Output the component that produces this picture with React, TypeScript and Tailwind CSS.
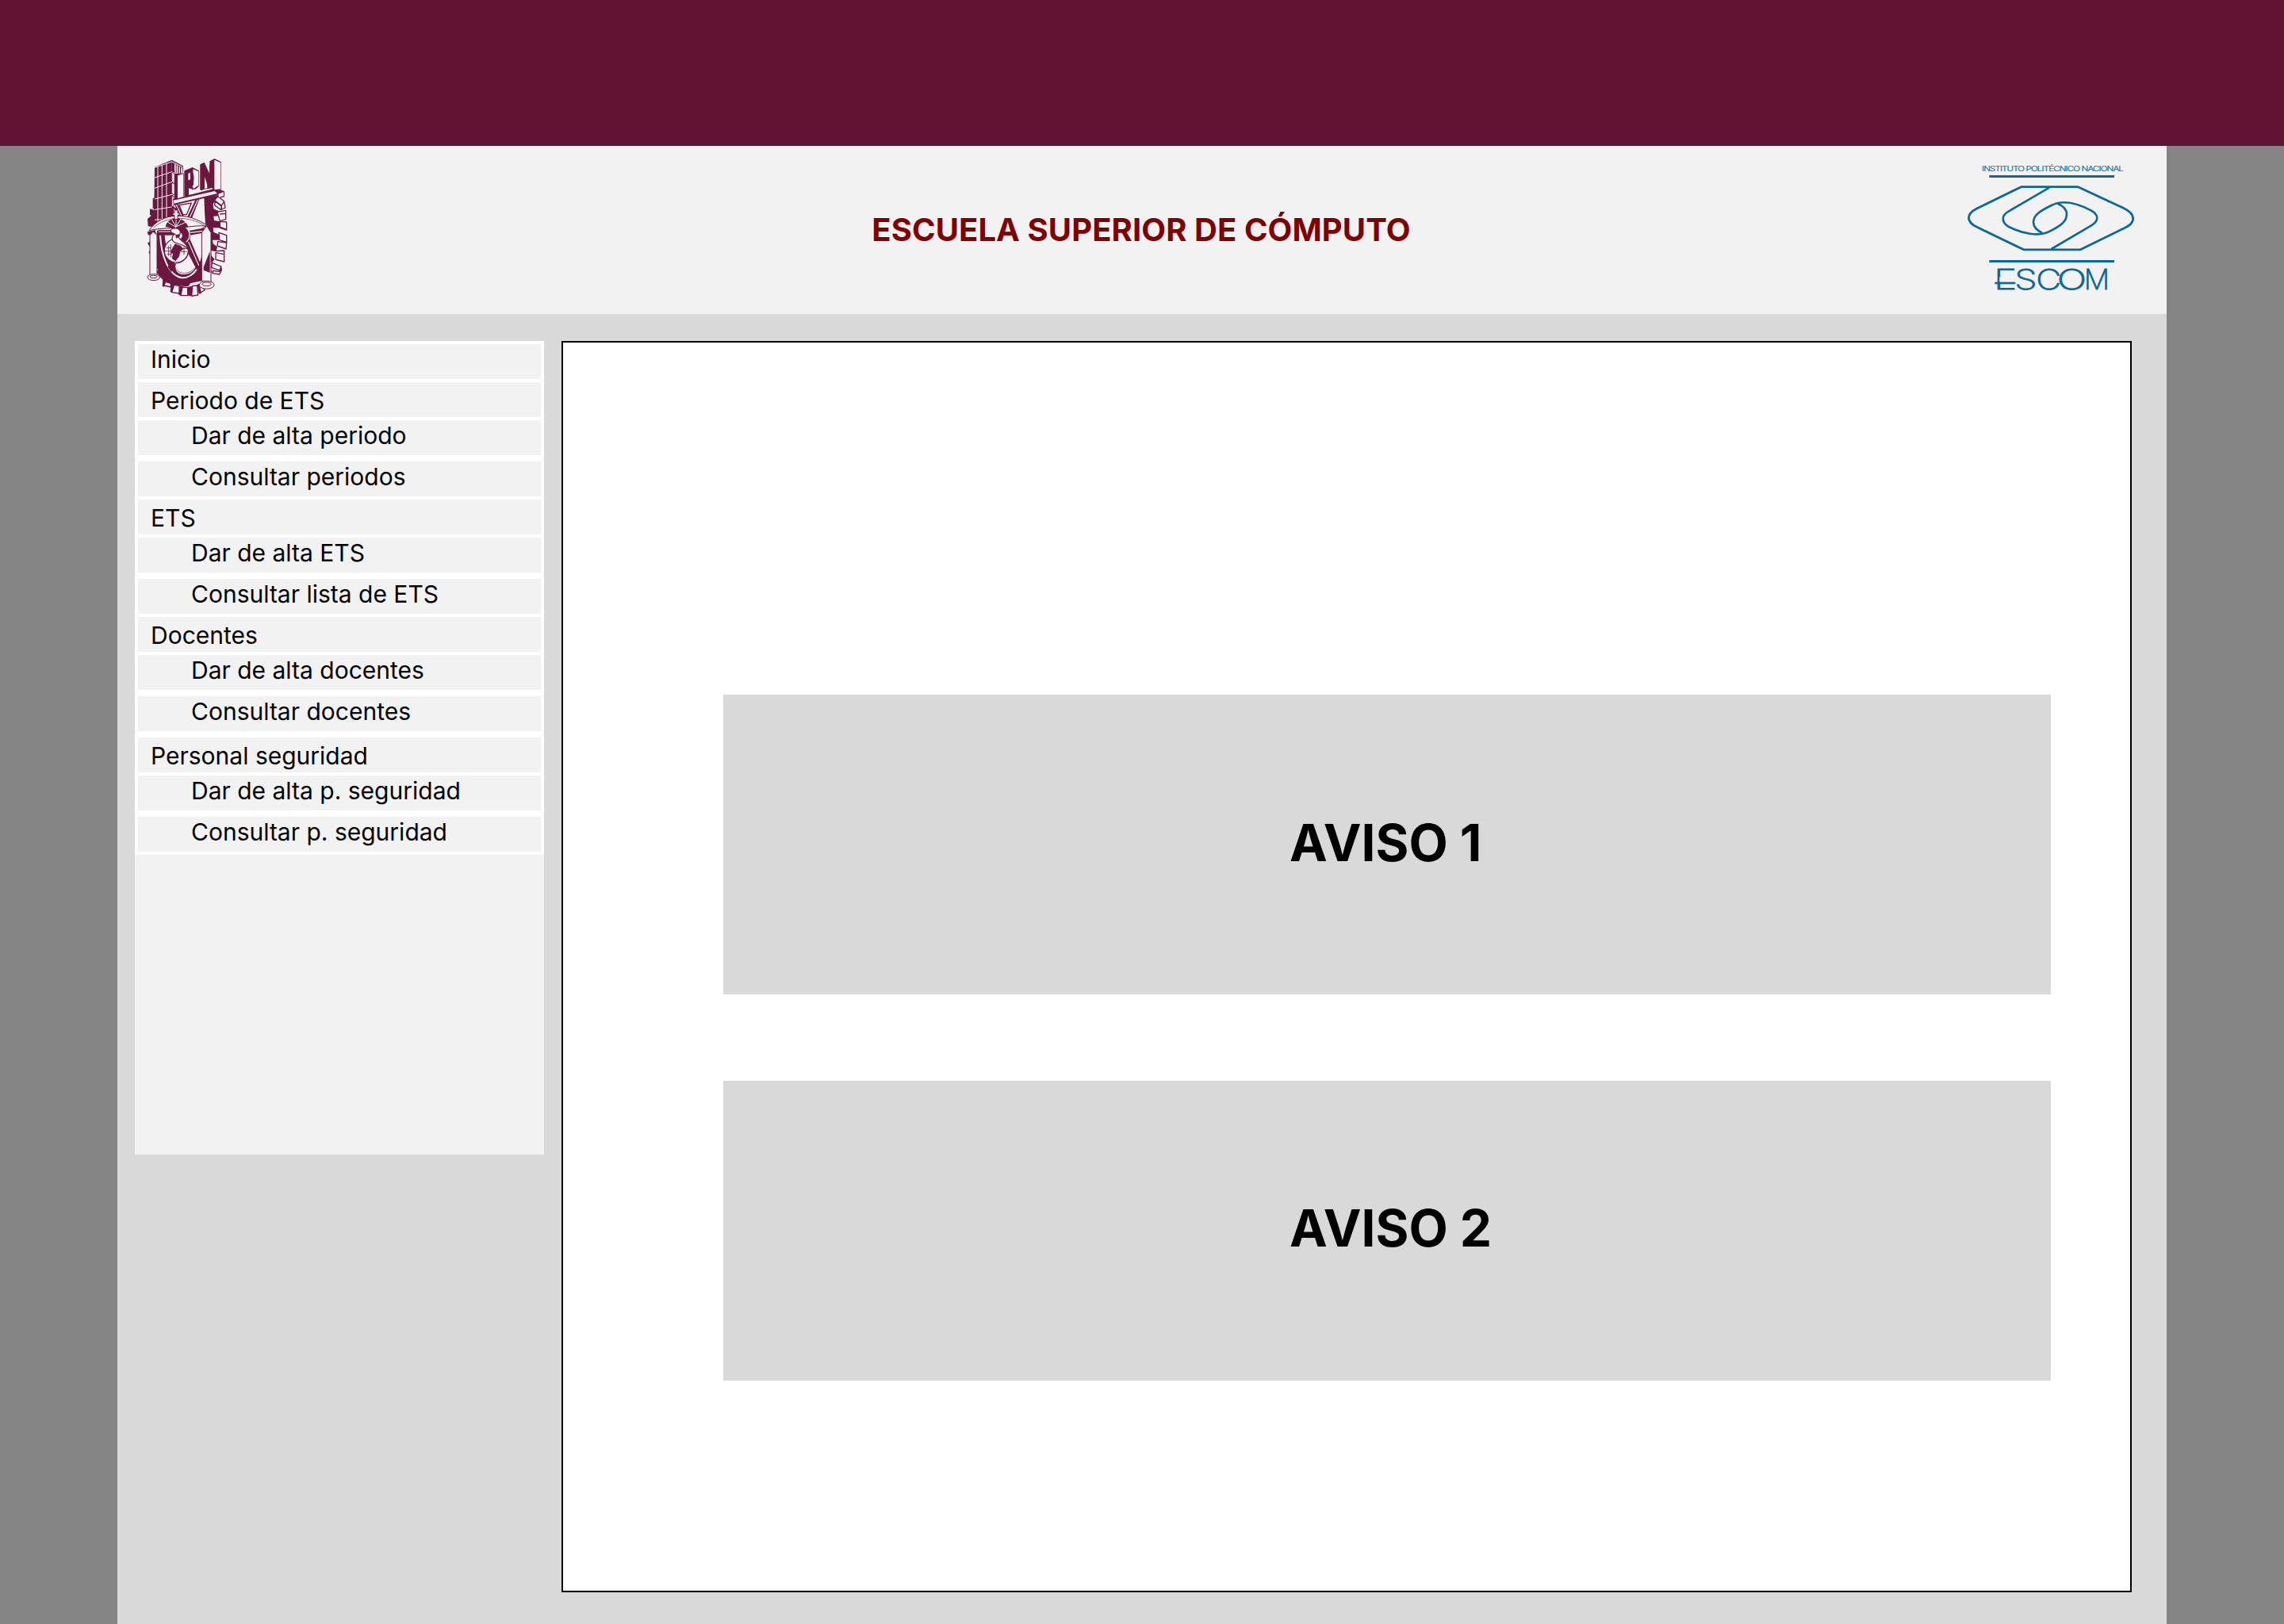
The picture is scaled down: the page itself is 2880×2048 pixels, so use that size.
const menu = [
  { label: 'Inicio', cell: 'mt-1 pl-4 pt-px' },
  { label: 'Periodo de ETS', cell: 'mt-1 pl-4 pt-[5px]' },
  { label: 'Dar de alta periodo', cell: 'mt-1 pl-[67px] pt-px' },
  { label: 'Consultar periodos', cell: 'mt-2 pl-[67px] pt-px' },
  { label: 'ETS', cell: 'mt-1 pl-4 pt-[5px]' },
  { label: 'Dar de alta ETS', cell: 'mt-1 pl-[67px] pt-px' },
  { label: 'Consultar lista de ETS', cell: 'mt-2 pl-[67px] pt-px' },
  { label: 'Docentes', cell: 'mt-1 pl-4 pt-[5px]' },
  { label: 'Dar de alta docentes', cell: 'mt-1 pl-[67px] pt-px' },
  { label: 'Consultar docentes', cell: 'mt-2 pl-[67px] pt-px' },
  { label: 'Personal seguridad', cell: 'mt-2 pl-4 pt-[5px]' },
  { label: 'Dar de alta p. seguridad', cell: 'mt-1 pl-[67px] pt-px' },
  { label: 'Consultar p. seguridad', cell: 'mt-2 pl-[67px] pt-px' },
];

const M = '#6b1740';
const W = '#f2f2f2';

function IpnLogo() {
  return (
    <svg className="h-[176px] w-[102px] shrink-0 overflow-visible" viewBox="135 87 306 528">
      {/* gear rim and left teeth */}
      <g fill={M}>
        <path d="M158 240l8-2v44l-8-4zM147 280l20 6v28l-12-6-8-6zM138 318l14-12 16 10v34l-28-4zM138 366l30-6v26l-28-8zM138 410l12-8 30-2v34l-30-4zM142 444l12-14 22 4 8 28-26 10zM150 492l16-26 24-2 12 36-22 8-28-4z" />
        <path d="M352 236L404 228 398 246 386 262 388 280 412 290 412 306 388 308 390 324 412 328 412 352 386 352 388 368 410 378 408 398 384 398 386 412 402 424 398 442 376 438 380 458 392 470 382 484 372 474 368 500 384 520 366 524 346 510 346 552 326 556 300 562 292 574 266 572 234 566 204 556 184 536 172 520 182 500 176 470 174 362 200 362 206 440 230 500 262 540 310 528 336 480 350 420 356 340Z" />
      </g>
      {/* right teeth */}
      <g fill={W} stroke={M} strokeWidth="4" strokeLinejoin="round">
        <path d="M404 232l24 20-10 16-26-20zM394 252l24 18-2 14-24-18zM428 252l4 24-14 6v-14zM402 292l32-6v34l-22 6zM412 300l22-2M412 328l25 2v30l-25-8zM412 348l25 10M408 370l29 10v26l-27-8zM404 404l33 4-2 24-33-12zM396 446l32 6v28l-32-8zM398 440l30-2v14M382 484l34 14-2 16-34-12zM416 498l2 14-8 16-26-4 2-10 24 4z" />
      </g>
      {/* bottom teeth */}
      <g fill={W} stroke={M} strokeWidth="4" strokeLinejoin="round">
        <path d="M206 556l20 6v14l-26-6zM238 568l20 4v28l-28-4zM270 576l20 2v30h-26zM308 572l18-2 3 36-24 4zM334 566l14-6 6 28-18 10z" />
      </g>
      <path d="M196 544l12 8-8 24-6-4zM228 562l12 4-10 32-6-4zM260 570l12 4-8 34-8-2zM290 576l16-4v38h-14zM326 566l8-2 8 36-10 2z" fill={M} />
      {/* wheel opening */}
      <path d="M184 362C184 450 212 530 262 544C318 540 340 490 348 430C362 350 356 280 342 244L244 262L230 362Z" fill={W} />
      <path d="M182 362C182 450 208 530 262 546C302 544 326 518 336 494L318 470C306 500 286 516 262 510C226 490 204 430 202 362Z" fill={M} />
      <path d="M186 380C190 456 216 530 266 541C292 542 312 528 326 506" fill="none" stroke={W} strokeWidth="6" />
      {/* spokes */}
      <path d="M238 258l12-3 28 58-12 6zM320 244l14 0-28 72-18-4zM298 362l70-12v18l-70 12zM284 394l14 0 42 96-16 22-46-92z" fill={M} />
      <path d="M328 246l-30 66M244 258l26 56M300 370l64-8M290 398l42 96" stroke={W} strokeWidth="3.5" fill="none" />
      <path d="M258 266l46-8-18 44h-14zM234 270l26 38-26 2z" fill={W} stroke={M} strokeWidth="4" />
      {/* hub */}
      <path d="M250 346C304 340 312 392 286 412L262 394C276 384 270 368 250 366Z" fill={M} />
      <path d="M284 350C302 366 300 392 284 406" stroke={W} strokeWidth="4" fill="none" />
      <path d="M180 360h60v20h-60z" fill={M} />
      <path d="M180 366h60" stroke={W} strokeWidth="3" />
      <path d="M226 474l18 14-16 32-14-20z" fill={M} />
      <path d="M244 486C238 512 250 530 276 530C300 528 316 516 320 500L292 446C290 466 272 486 244 486Z" fill={W} stroke={M} strokeWidth="3" />
      <path d="M248 508C256 528 296 530 314 506" fill="none" stroke={M} strokeWidth="2" />
      {/* tower */}
      <path d="M165 122L230 95L230 350L162 358Z" fill={M} />
      <path d="M230 95L273 118L271 152L240 140L236 330L228 330Z" fill={M} />
      <path d="M240 110l5 2v29l-5-2zM248 114l5 2v29l-5-2zM257 119l4 2v28l-4-1zM265 123l5 2v25l-5-1z" fill={W} />
      <path d="M177 120V356M193 113V354M210 106V352M165 162L230 140L240 146M165 202L230 178L240 184M165 243L230 226L238 230M165 283L230 273M165 322L230 316M166 124L230 102L271 122" fill="none" stroke={W} strokeWidth="3" />
      <path d="M230 142l10 5v36l-10-6zM230 182l10 4v42l-10-6zM230 232l7 2v36l-7 2z" fill={W} stroke={M} strokeWidth="2" />
      {/* slab under the initials */}
      <path d="M234 244L398 202L429 214L429 234L410 240L402 228L238 266Z" fill={M} />
      <path d="M236 248L392 213L402 222L238 260Z" fill={W} />
      <path d="M406 224l20-8v14l-18 7z" fill={W} />
      {/* block volumes behind the initials */}
      <path d="M240 146l36 0v86l-36 14zM277 136l31-13 24 12v60l-10 10-12 2-8 8 4 12-29 6zM337 112l16-8 20 44V100l18-10 25 12v106l-26 4-20-28v20l-33 4z" fill={M} />
      <path d="M252 154l22-6v86l-22 6zM310 130l20 8v54l-18 12-4-8 4-8zM294 202l14 4v18l-14 4zM391 95l23 10v100l-23 3zM354 150l10 26v26l-10 2z" fill={W} />
      <g fontFamily="Liberation Sans" fontWeight="700" fontSize="118">
        <text transform="translate(276 228) skewY(-13) scale(.5 1)" fill={M}>P</text>
        <text transform="translate(334 212) skewY(-13) scale(.62 1.1)" fill={M}>N</text>
      </g>
      <path d="M292 146l8-3v26l-8 3z" fill={W} />
      {/* fan */}
      <path d="M144 362C190 292 292 290 368 346C330 340 300 350 240 352C200 354 170 356 144 362Z" fill={W} stroke={M} strokeWidth="3" />
      <path d="M206 348C210 326 230 316 246 314C268 316 286 330 292 348C270 352 230 354 206 348Z" fill={M} />
      <path d="M246 350L214 330M246 348L228 318M246 348V312M246 348L264 318M246 348L284 330" stroke={W} strokeWidth="3" />
      <path d="M160 352C210 306 290 306 352 342" fill="none" stroke={M} strokeWidth="2" />
      <path d="M240 284h12v12h6v8h-6v16h-12v-16h-6v-8h6z" fill={W} stroke={M} strokeWidth="3" />
      <circle cx="246" cy="280" r="6" fill={M} />
      {/* balance cords and pans */}
      <g fill={W} stroke={M} strokeWidth="3">
        <path d="M147 530V380L160 366L174 380V530ZM343 552V370L362 344L378 370V558Z" />
        <path d="M140 374L160 364L178 378M334 362L362 342L382 366" fill="none" />
        <ellipse cx="161" cy="539" rx="23" ry="12" />
        <ellipse cx="161" cy="537" rx="14" ry="5" />
        <ellipse cx="362" cy="568" rx="28" ry="15" />
        <ellipse cx="362" cy="565" rx="17" ry="7" />
      </g>
      <path d="M350 380h20V430L350 500ZM350 516l24 10v24h-24z" fill={W} />
      <path d="M350 500L374 440V522L350 512Z" fill={M} />
      {/* globe and serpent */}
      <circle cx="247" cy="438" r="45" fill={W} stroke={M} strokeWidth="3.5" />
      <path d="M242 412l22 8 10 12-12 10-4 18-14 18-14-10 4-18-10-4 8-18z" fill={M} />
      <path d="M204 440h24M210 428h18M212 452h18M262 430h26M264 442h22M218 420v38M276 424v30M226 414v50" stroke={M} strokeWidth="2.5" />
      <path d="M226 362C226 350 258 350 262 366C262 380 258 382 256 388C262 404 286 404 292 434C280 414 250 414 236 404C226 394 232 380 242 376C232 372 224 370 226 362Z" fill={W} stroke={M} strokeWidth="3.5" />
      <path d="M244 378l14-2v10l-12 6z" fill={M} />
    </svg>
  );
}

function EscomLogo() {
  return (
    <svg className="h-[164px] w-[212px] shrink-0 overflow-visible" viewBox="60 78 636 492" fill="none" stroke="#0b6898">
      <text x="117" y="107" textLength="534" lengthAdjust="spacingAndGlyphs" letterSpacing="-2" fontFamily="Inter" fontWeight="300" fontSize="27" fill="#0b6898" strokeWidth="0.6">
        INSTITUTO POLITÉCNICO NACIONAL
      </text>
      <path d="M145 127.5H618M145 448.5H618" strokeWidth="9" />
      <path d="M266 167H481L652 247C700 270 700 302 660 321L490 404.500H275L98 319C57 298 57 270 98 249Z" strokeWidth="8.500" strokeLinejoin="round" />
      <path d="M372 170L219 259C190 274 190 302 219 318C270 344 330 356 372 336C416 314 438 298 438 270C438 252 422 238 404 230" strokeWidth="8" />
      <path d="M380 402L530 314C561 296 560 272 530 256C480 230 424 214 380 237C334 260 312 274 312 302C313 320 326 332 345 341" strokeWidth="8" />
      <g fontFamily="Inter" fontWeight="200" fontSize="105" fill="#0b6898" strokeWidth="2.5" strokeLinejoin="round">
        <text transform="translate(162 556) scale(1.42 1)">E</text>
        <text transform="translate(241 556) scale(1.3 1)">S</text>
        <text transform="translate(322 556) scale(1.26 1)">C</text>
        <text transform="translate(401 556) scale(1.42 1)">O</text>
        <text transform="translate(503 556) scale(1.03 1)">M</text>
      </g>
      <rect x="184" y="508" width="61" height="18" fill={W} stroke="none" />
      <path d="M166 531H244" strokeWidth="8" />
    </svg>
  );
}

function Notice({ title, offset }: { title: string; offset: string }) {
  return (
    <section className={`h-[378px] w-[1674px] bg-[#d9d9d9] pl-[714px] ${offset}`}>
      <h2 className="text-[64px] leading-[78px] font-bold">{title}</h2>
    </section>
  );
}

export default function App() {
  return (
    <div className="flex h-[2048px] w-[2880px] flex-col overflow-hidden bg-[#848484] font-['Inter',sans-serif] text-black">
      <div className="h-[184px] shrink-0 bg-[#611232]" />
      <div className="mx-[148px] flex flex-1 flex-col bg-[#d9d9d9]">
        <header className="flex h-[212px] shrink-0 items-start justify-between bg-[#f2f2f2] pt-[15px] pr-[40px] pl-[37px]">
          <IpnLogo />
          <h1 className="mt-[67px] ml-[111px] text-[40px] leading-[48px] font-bold tracking-[0.08px] whitespace-nowrap text-[#800000]">
            ESCUELA SUPERIOR DE CÓMPUTO
          </h1>
          <div className="pt-[7px]">
            <EscomLogo />
          </div>
        </header>
        <div className="flex items-start gap-[22px] pt-[34px] pl-[22px]">
          <aside className="h-[1026px] w-[516px] bg-[#f2f2f2]">
            <nav className="flex flex-col bg-white px-1 pb-1">
              {menu.map((item) => (
                <a key={item.label} className={`h-11 bg-[#f2f2f2] text-[30px] leading-[36px] whitespace-nowrap ${item.cell}`}>
                  {item.label}
                </a>
              ))}
            </nav>
          </aside>
          <main className="flex h-[1578px] w-[1980px] flex-col gap-[109px] border-2 border-black bg-white pt-[444px] pl-[202px]">
            <Notice title="AVISO 1" offset="pt-[148px]" />
            <Notice title="AVISO 2" offset="pt-[147px]" />
          </main>
        </div>
      </div>
    </div>
  );
}
